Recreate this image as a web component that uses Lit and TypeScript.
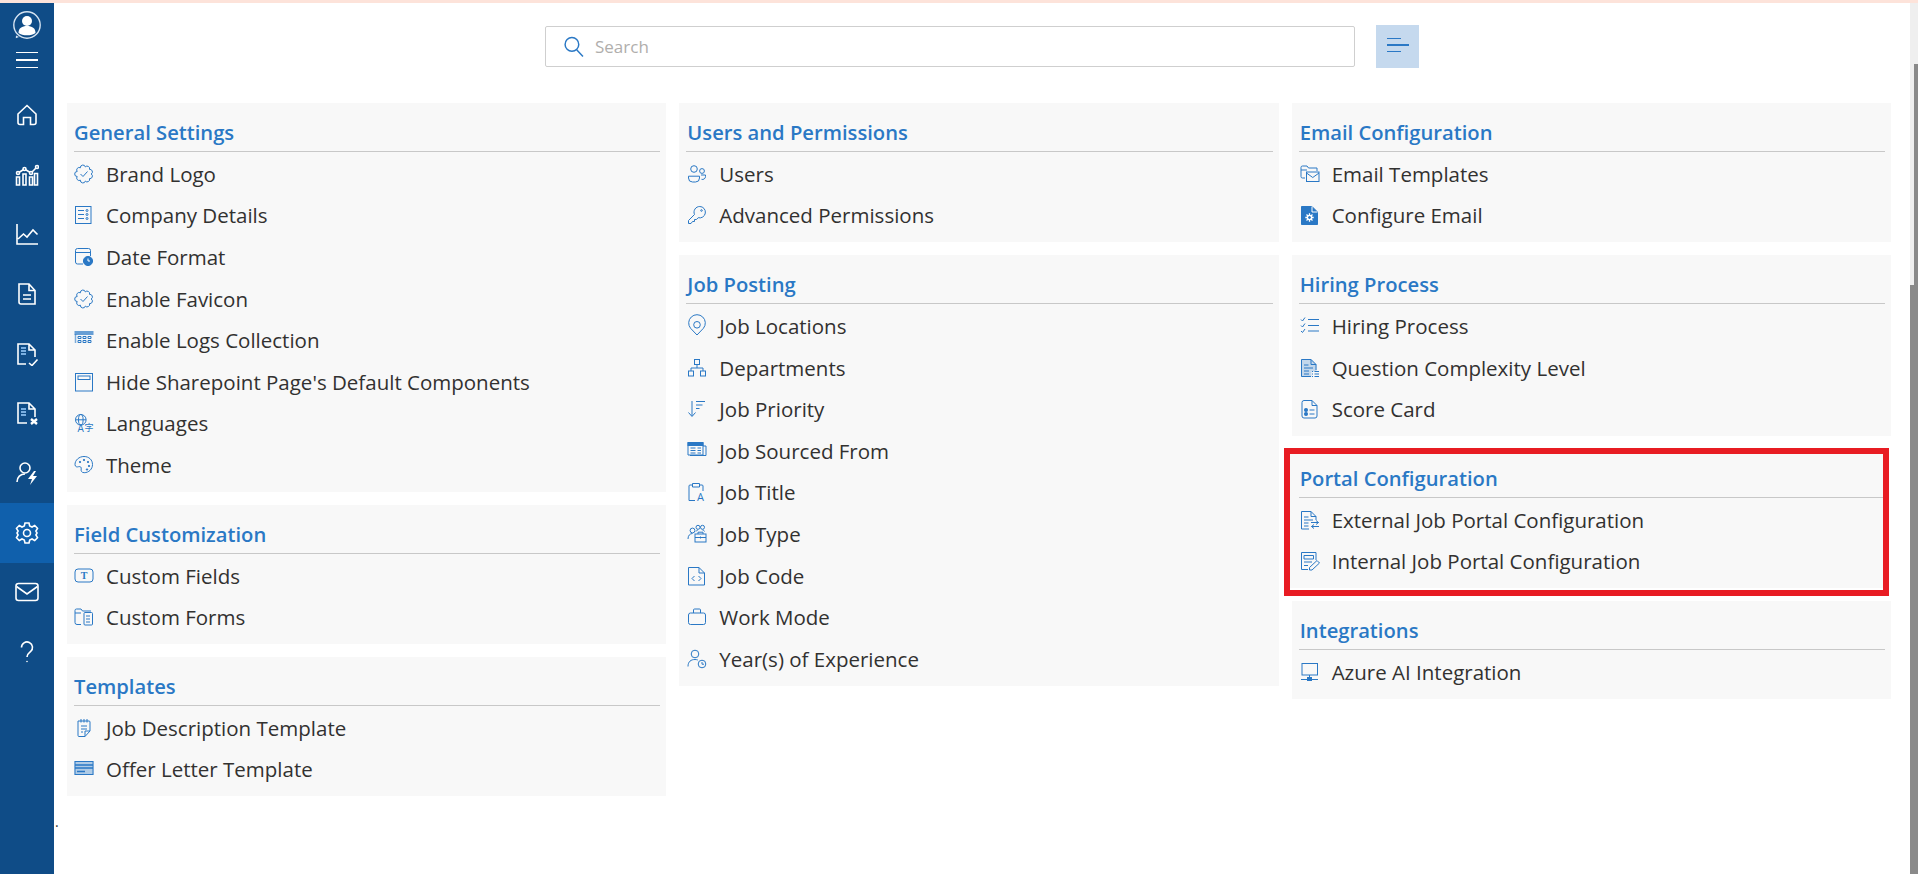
import {LitElement, html, svg, css, TemplateResult} from 'lit';
import {customElement} from 'lit/decorators.js';

// scalloped badge outline, used by Brand Logo and Enable Favicon
const scallop = (() => {
  const n = 9;
  const pts = Array.from({length: n}, (_, i) => {
    const a = (i / n) * Math.PI * 2;
    return [10 + 7.2 * Math.cos(a), 10 + 7.2 * Math.sin(a)];
  });
  return (
    `M${pts[0][0].toFixed(1)} ${pts[0][1].toFixed(1)}` +
    pts.slice(1).concat([pts[0]]).map((p) => `A2.5 2.5 0 0 1 ${p[0].toFixed(1)} ${p[1].toFixed(1)}`).join('')
  );
})();

const badge = svg`<path d=${scallop}/><path d="M6.5 10l2.5 2.5 4.5-5"/>`;

const icons: Record<string, TemplateResult> = {
  badge,
  company: svg`<rect x="1.5" y="1.5" width="15.5" height="17"/><path d="M4 5.5h6M4 9.5h6M4 13.5h6"/><circle cx="13" cy="5.5" r="1"/><circle cx="13" cy="9.5" r="1"/><circle cx="13" cy="13.5" r="1"/>`,
  date: svg`<path d="M9 17H3.5a2 2 0 0 1-2-2V3.5a2 2 0 0 1 2-2h11a2 2 0 0 1 2 2V9M1.5 5.5h15"/><circle class="f" cx="14" cy="14" r="4.6"/><path class="w" d="M14 11.5V14h2"/>`,
  logs: svg`<rect class="f" x="1" y="1.5" width="18" height="3" opacity=".7"/><path d="M1.5 4v9" stroke-width="1.5" opacity=".6"/><path d="M4 6.5h3v2H4zM9 6.5h3v2H9zM14 6.5h3v2h-3zM4 10.5h3v2H4zM9 10.5h3v2H9zM14 10.5h3v2h-3z"/>`,
  window: svg`<rect x="1.5" y="1.5" width="17" height="17.5"/><rect x="4" y="4" width="12" height="3.5"/>`,
  lang: svg`<circle cx="6.8" cy="6.8" r="5.3"/><ellipse cx="6.8" cy="6.8" rx="2.3" ry="5.3"/><path d="M1.5 6.8h10.6"/><text class="t" x="3.5" y="18.5" font-size="10">A</text><text class="t" x="10.5" y="18" font-size="9">字</text>`,
  theme: svg`<path d="M10 1.5C5 1.5 1 5.2 1 9.5c0 2.6 2.2 2.6 3.6 2.2 1.8-.5 3 .6 2.6 2.2-.4 1.8.2 3.8 3 3.8 4.6 0 8.3-3.6 8.3-8.2S15 1.5 10 1.5z"/><circle class="f" cx="6" cy="7" r=".7"/><circle class="f" cx="10" cy="5" r=".7"/><circle class="f" cx="14" cy="7" r=".7"/><circle class="f" cx="15" cy="11" r=".7"/><circle class="f" cx="13" cy="14.5" r=".7"/>`,
  field: svg`<rect x="1" y="3" width="18" height="13" rx="3"/><text class="s" x="10" y="13" text-anchor="middle" font-size="10">T</text>`,
  forms: svg`<path d="M7 17.5H3a2 2 0 0 1-2-2V3.5a1.5 1.5 0 0 1 1.5-1.5H7l1.5 2H17M1 6h6"/><rect x="10" y="5.5" width="8.5" height="12.5" rx="1"/><path d="M12 9h4M12 12h4M12 15h4"/>`,
  jobdesc: svg`<path d="M4 3h11a1 1 0 0 1 1 1v9l-5 5.5H5a1 1 0 0 1-1-1zM7 1v3.5M10 1v3.5M13 1v3.5M7 8h6M7 11h6M7 14h2M16 13h-5v5.5"/>`,
  offer: svg`<rect class="f" x="1" y="2.5" width="18" height="13" opacity=".35"/><rect x="1" y="2.5" width="18" height="13"/><path d="M1 6h18M1 9h18M3 12.5h8" stroke-width="1.5"/>`,
  users: svg`<circle cx="7" cy="5" r="3.3"/><circle cx="15" cy="7" r="2.4"/><path d="M1.5 12.2h11v1.8a4 4 0 0 1-4 4h-3a4 4 0 0 1-4-4zM14 11h4.5v1.5a3 3 0 0 1-4 2.8"/>`,
  key: svg`<path d="M12.8 1.5a5.7 5.7 0 1 1-1.6 11.2L9.5 14.5H7.5v2H5.5L4 18.5H1.5v-3l6-6a5.7 5.7 0 0 1 5.3-8z"/><circle cx="14.5" cy="5.5" r=".8"/>`,
  pin: svg`<path d="M10 19L3.6 12.3a8.3 8.3 0 1 1 12.8 0z"/><circle cx="10" cy="8.8" r="3.3"/>`,
  dept: svg`<rect x="7.5" y="1.5" width="5" height="5"/><rect x="1.5" y="13" width="5" height="5"/><rect x="13.5" y="13" width="5" height="5"/><path d="M10 6.5V10M4 13v-3h12v3"/>`,
  priority: svg`<path d="M5 2v15M1.5 13.5L5 17.5l3.5-4M9 2.5h9M9 6h6.5M9 9.5h3.5"/>`,
  sourced: svg`<rect class="f" x="1" y="1.5" width="15" height="3"/><path d="M1 1.5h15V14H1zM16 5h3v9.5H3M3.5 7h5M3.5 9.5h5M3.5 12h5M10.5 7h3.5M10.5 9.5h3.5M10.5 12h3.5"/>`,
  title: svg`<path d="M5 3H3a1 1 0 0 0-1 1v14.5h6M13 3h2a1 1 0 0 1 1 1v5M5.5 1.5h7V5h-7z"/><text class="t" x="10" y="18.5" font-size="11">A</text>`,
  jobtype: svg`<circle cx="5.5" cy="6.5" r="2.4"/><circle cx="11" cy="3.3" r="2"/><circle cx="15.5" cy="3.3" r="2"/><path d="M1 15c0-3.5 2-5.5 4.5-5.5M9 7.5c.5-1 1-1.5 2-1.5M15.5 6c1 0 1.5.5 2 1.5"/><rect x="8" y="10" width="11" height="8"/><path d="M11 10V8.2h5V10M8 13.5h11M13.5 12.5v2"/>`,
  code: svg`<path d="M1.5 1.5H12L17.5 7v12H1.5zM12 1.5V7h5.5M7.5 10l-2.5 2.5L7.5 15M11.5 10l2.5 2.5L11.5 15"/>`,
  work: svg`<rect x="1.5" y="6" width="17" height="11.5" rx="2"/><path d="M6.5 6V3a1 1 0 0 1 1-1h5a1 1 0 0 1 1 1v3"/>`,
  exp: svg`<circle cx="8" cy="5" r="3.8"/><path d="M1 17.5C1 12.5 4 10.5 8 10.5c1 0 2 .2 2.8.5"/><circle cx="15" cy="15" r="3.8"/><path d="M15 13v2.2h2"/>`,
  mailtpl: svg`<path d="M5 14H2.5A1.5 1.5 0 0 1 1 12.5V3.5A1.5 1.5 0 0 1 2.5 2H7l1.5 2H17v3M1 6h6"/><rect x="6.5" y="8" width="12.5" height="9.5"/><path d="M6.5 9l6.25 4.5L19 9"/>`,
  cfgmail: svg`<path class="f" d="M1.5 1.5H12L17.5 7v12.5H1.5z"/><path class="w" d="M12 1.5V7h5.5"/><circle class="wf" cx="9.5" cy="12.5" r="2.8"/><path class="w" stroke-width="1.3" d="M9.5 8.3v8.4M5.3 12.5h8.4M6.5 9.5l6 6M12.5 9.5l-6 6"/><circle class="f" cx="9.5" cy="12.5" r="1"/>`,
  hiring: svg`<path d="M1 3.5l1.5 1.5L5 1.5M1 9.5l1.5 1.5L5 7.5M1 15l1.5 1.5L5 13M8 3.5h11M8 9.5h11M8 15h11"/>`,
  question: svg`<path class="f" opacity=".25" d="M1.5 1.5H11L16 6.5V13h-5v5.5H1.5z"/><path d="M11 18.5H1.5v-17H11L16 6.5V12M11 1.5v5h5M4 7h4.5M4 10h9M4 13h5M4 16h5M12 13.5h1M14.5 13.5h4.5M12 16h1M14.5 16h4.5M12 18.5h1M14.5 18.5h4.5"/>`,
  score: svg`<path d="M4 1.5h8L17 6.5V17a2 2 0 0 1-2 2H4a2 2 0 0 1-2-2V3.5a2 2 0 0 1 2-2zM12 1.5v5h5M9.5 11h5M9.5 15h5"/><rect class="f" x="4.5" y="9.5" width="3" height="3" rx="1"/><rect class="f" x="4.5" y="13.5" width="3" height="3" rx="1"/>`,
  external: svg`<path d="M9 19H1.5V1.5H11L16 6.5V10M11 1.5v5h5M4 7h4.5M4 10h9M4 13h4.5M4 16h4.5M11 12.5h7.5M16 10.5l2.5 2-2.5 2M19 16.5h-7.5M14 14.5l-2.5 2 2.5 2"/>`,
  internal: svg`<path d="M8 18.5H1.5V1.5H16V9M4 4.5h9.5v3.5H4zM4 11h8M4 14.5h4"/><path d="M17 9.5l2.5 2.5-7.5 7H9.5V16.5z"/>`,
  azure: svg`<rect x="2" y="1.5" width="15.5" height="11.5"/><path d="M9.5 13v3M1 17.5h6.5M11.5 17.5H18"/><rect class="f" x="7.5" y="15.5" width="4" height="3"/>`,
};

const nav: TemplateResult[] = [
  svg`<path d="M3 11L12 2.5 21 11v8.5a2 2 0 0 1-2 2h-3.5v-7h-7v7H5a2 2 0 0 1-2-2z"/>`,
  svg`<path d="M2 14h3v8H2zM8.5 11h3v11h-3zM15 14h3v8h-3zM20 10.5h3V22h-3z" transform="translate(-.5 0)"/><path d="M3 10L9.5 6l6.5 4 6-6"/><circle class="n" cx="3" cy="10" r="1.5"/><circle class="n" cx="9.5" cy="6" r="1.5"/><circle class="n" cx="16" cy="10" r="1.5"/><circle class="n" cx="22" cy="4" r="1.5"/>`,
  svg`<path d="M2 2v20h21M3 17l5.5-5 3.5 3 6-7 4.5 4.5"/>`,
  svg`<path d="M4 2h10l6 6.5V22H6a2 2 0 0 1-2-2zM14 2v6.5h6M8 13h8M8 17h8"/>`,
  svg`<path d="M11 22H3V2h11l6 6v7M14 2v6h6"/><path class="m" d="M6 6h5M6 9h5M6 12h5"/><path d="M14 21l3 2.5 5.5-6"/>`,
  svg`<path d="M12 22H3V2h11l6 6v8M14 2v6h6"/><path class="m" d="M6 8h5M6 11h5M6 14h5"/><path class="b" d="M16 18l6 5M22 18l-6 5"/>`,
  svg`<circle cx="10" cy="7" r="5"/><path d="M2 21c0-5 3.5-8 8-8"/><path class="nf" d="M19 10l-6 8h4l-2 6 7-9h-4l3-5z"/>`,
  svg`<circle cx="12" cy="12" r="3.5"/><path d="M10 2h4l.7 3 2.3 1 2.7-1.5 2.8 2.8L20.9 10l1.1 2-1.1 2 1.6 2.7-2.8 2.8-2.7-1.5-2.3 1-.7 3h-4l-.7-3-2.3-1-2.7 1.5-2.8-2.8L3.1 14 2 12l1.1-2-1.6-2.7 2.8-2.8L7 6l2.3-1z"/>`,
  svg`<rect x="1" y="3.5" width="22" height="17" rx="2.5"/><path d="M1.5 6.5L12 14l10.5-7.5"/>`,
  svg`<path d="M6.5 7.5a5.5 5.5 0 1 1 9 4.2c-1.8 1.5-3.5 2.5-3.5 5.3" fill="none"/><circle class="nf" cx="12" cy="21.5" r=".8"/>`,
];

const columns: {title: string; items: [string, string][]; marked?: boolean}[][] = [
  [
    {title: 'General Settings', items: [['badge', 'Brand Logo'], ['company', 'Company Details'], ['date', 'Date Format'], ['badge', 'Enable Favicon'], ['logs', 'Enable Logs Collection'], ['window', "Hide Sharepoint Page's Default Components"], ['lang', 'Languages'], ['theme', 'Theme']]},
    {title: 'Field Customization', items: [['field', 'Custom Fields'], ['forms', 'Custom Forms']]},
    {title: 'Templates', items: [['jobdesc', 'Job Description Template'], ['offer', 'Offer Letter Template']]},
  ],
  [
    {title: 'Users and Permissions', items: [['users', 'Users'], ['key', 'Advanced Permissions']]},
    {title: 'Job Posting', items: [['pin', 'Job Locations'], ['dept', 'Departments'], ['priority', 'Job Priority'], ['sourced', 'Job Sourced From'], ['title', 'Job Title'], ['jobtype', 'Job Type'], ['code', 'Job Code'], ['work', 'Work Mode'], ['exp', 'Year(s) of Experience']]},
  ],
  [
    {title: 'Email Configuration', items: [['mailtpl', 'Email Templates'], ['cfgmail', 'Configure Email']]},
    {title: 'Hiring Process', items: [['hiring', 'Hiring Process'], ['question', 'Question Complexity Level'], ['score', 'Score Card']]},
    {title: 'Portal Configuration', marked: true, items: [['external', 'External Job Portal Configuration'], ['internal', 'Internal Job Portal Configuration']]},
    {title: 'Integrations', items: [['azure', 'Azure AI Integration']]},
  ],
];

@customElement('app-root')
export class AppRoot extends LitElement {
  static styles = css`
    :host {
      display: block;
      position: relative;
      width: 1918px;
      height: 874px;
      overflow: hidden;
      background: #fff;
      font-family: 'Open Sans', 'Noto Sans', sans-serif;
      color: #323130;
    }
    .topline {
      height: 3px;
      background: #fde3da;
    }
    .shell {
      display: flex;
      height: 871px;
    }
    .side {
      width: 54px;
      flex: none;
      background: #0f4c87;
      display: flex;
      flex-direction: column;
    }
    .side-head {
      height: 82px;
      display: flex;
      flex-direction: column;
      align-items: center;
      padding-top: 7px;
      box-sizing: border-box;
    }
    .avatar {
      width: 30px;
      height: 30px;
      flex: none;
    }
    .burger {
      width: 22px;
      height: 16px;
      flex: none;
      margin-top: 12px;
      border-top: 1.5px solid #fff;
      border-bottom: 1.5px solid #fff;
      box-sizing: border-box;
      display: flex;
      align-items: center;
    }
    .burger i {
      display: block;
      width: 100%;
      height: 1.5px;
      background: #fff;
    }
    .nav-item {
      height: 59.7px;
      display: flex;
      align-items: center;
      justify-content: center;
    }
    .nav-item.on {
      background: #1060ac;
    }
    .nav-item svg {
      width: 24px;
      height: 24px;
      fill: none;
      stroke: #fff;
      stroke-width: 1.6;
    }
    .nav-item .n {
      fill: #0f4c87;
    }
    .nav-item .nf {
      fill: #fff;
      stroke: none;
    }
    .nav-item .m {
      stroke: #9fd0ff;
    }
    .nav-item .b {
      stroke-width: 2.4;
    }
    .main {
      width: 1856px;
      flex: none;
      box-sizing: border-box;
      padding: 0 19px 0 13px;
    }
    .search-row {
      height: 100px;
      display: flex;
      justify-content: center;
      align-items: flex-start;
      gap: 21px;
      padding: 22px 0 0 6px;
      box-sizing: border-box;
    }
    .search {
      width: 810px;
      height: 41px;
      margin-top: 1px;
      box-sizing: border-box;
      border: 1px solid #cfcfcf;
      border-radius: 2px;
      display: flex;
      align-items: center;
      padding-left: 17px;
      gap: 11px;
      font-size: 17px;
      color: #b0aeac;
    }
    .search svg {
      width: 21px;
      height: 21px;
      fill: none;
      stroke: #2a78c5;
      stroke-width: 1.4;
    }
    .toggle {
      width: 43px;
      height: 43px;
      background: #c5d9ee;
      display: flex;
      flex-direction: column;
      justify-content: center;
      gap: 5px;
      padding: 0 0 3px 11px;
      box-sizing: border-box;
    }
    .toggle i {
      display: block;
      height: 1.5px;
      background: #2a78c5;
      width: 14px;
    }
    .toggle i:nth-child(2) {
      width: 22px;
    }
    .grid {
      display: grid;
      grid-template-columns: repeat(3, 1fr);
      gap: 13px;
      align-items: start;
    }
    .col {
      display: flex;
      flex-direction: column;
      gap: 13px;
    }
    .card {
      position: relative;
      background: #f8f8f8;
      padding: 0 6px 7px 7px;
    }
    .card.marked {
      margin: 0 2px 0 -2px;
      padding: 0 4px 7px 9px;
    }
    .card.marked::after {
      content: '';
      position: absolute;
      left: -6px;
      top: -1px;
      right: 0;
      bottom: -8px;
      border: 6px solid #e81c23;
      pointer-events: none;
    }
    h2 {
      margin: 0;
      height: 49px;
      box-sizing: border-box;
      border-bottom: 1px solid #c8c8c8;
      font-size: 20.2px;
      font-weight: 600;
      color: #2a78c5;
      line-height: 26px;
      padding-top: 16px;
    }
    .col + .col h2 {
      padding-left: 1px;
    }
    .row {
      height: 41.6px;
      box-sizing: border-box;
      padding-top: 2px;
      display: flex;
      align-items: center;
      gap: 12px;
      font-size: 20.5px;
    }
    .col + .col .row {
      padding-left: 1px;
    }
    .ic {
      width: 20px;
      height: 20px;
      flex: none;
      fill: none;
      stroke: #2a78c5;
      stroke-width: 1;
      overflow: visible;
    }
    .ic .f {
      fill: #2a78c5;
    }
    .ic .w {
      stroke: #fff;
      fill: none;
    }
    .ic .wf {
      fill: #fff;
      stroke: none;
    }
    .ic text {
      fill: #2a78c5;
      stroke: none;
    }
    .ic .t {
      font-family: 'Open Sans', 'Noto Sans CJK SC', sans-serif;
    }
    .ic .s {
      font-family: 'Liberation Serif', serif;
      font-weight: 700;
    }
    .track {
      position: absolute;
      right: 0;
      top: 3px;
      bottom: 0;
      width: 8px;
      background: #efefef;
    }
    .thumb {
      position: absolute;
      right: 0;
      top: 64px;
      width: 4px;
      height: 221px;
      background: #8a8a8a;
    }
    .thumb-low {
      position: absolute;
      right: 0;
      top: 285px;
      bottom: 0;
      width: 8px;
      background: #8a8a8a;
    }
    .dot {
      position: absolute;
      left: 55px;
      top: 812px;
      font-size: 14px;
      color: #333;
    }
  `;

  private card(c: {title: string; items: [string, string][]; marked?: boolean}) {
    return html`<section class="card ${c.marked ? 'marked' : ''}">
      <h2>${c.title}</h2>
      ${c.items.map(
        ([ic, label]) => html`<div class="row">
          <svg class="ic" viewBox="0 0 20 20">${icons[ic]}</svg>
          <span>${label}</span>
        </div>`
      )}
    </section>`;
  }

  render() {
    return html`
      <div class="topline"></div>
      <div class="shell">
        <aside class="side">
          <div class="side-head">
            <svg class="avatar" viewBox="0 0 30 30">
              <circle cx="15" cy="15" r="13.2" fill="none" stroke="#d5e3f1" stroke-width="1.4" />
              <circle cx="15" cy="11" r="5" fill="#fff" />
              <path d="M6.5 23c0-5 3.5-7 8.5-7s8.5 2 8.5 7c-2 1.5-5 2.3-8.5 2.3S8.5 24.5 6.5 23z" fill="#fff" />
              <path d="M4 25.5l3 1.5-3.2 1.2z" fill="#d5e3f1" />
            </svg>
            <div class="burger"><i></i></div>
          </div>
          ${nav.map(
            (n, i) => html`<div class="nav-item ${i === 7 ? 'on' : ''}">
              <svg viewBox="0 0 24 24">${n}</svg>
            </div>`
          )}
        </aside>
        <main class="main">
          <div class="search-row">
            <div class="search">
              <svg viewBox="0 0 20 20"><circle cx="8.5" cy="8" r="6.5" /><path d="M13 13l6 6.5" /></svg>
              <span>Search</span>
            </div>
            <div class="toggle"><i></i><i></i><i></i></div>
          </div>
          <div class="grid">
            ${columns.map((col) => html`<div class="col">${col.map((c) => this.card(c))}</div>`)}
          </div>
        </main>
      </div>
      <div class="track"></div>
      <div class="thumb"></div>
      <div class="thumb-low"></div>
      <div class="dot">.</div>
    `;
  }
}
